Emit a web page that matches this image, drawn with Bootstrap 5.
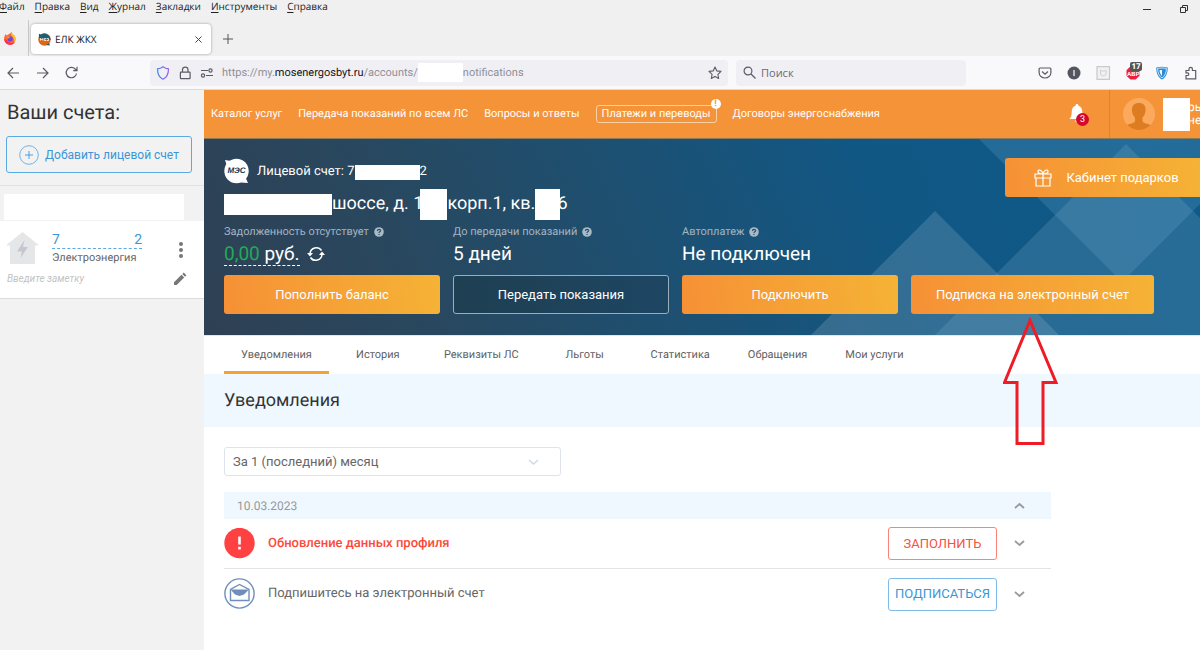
<!DOCTYPE html>
<html lang="ru">
<head>
<meta charset="utf-8">
<meta name="viewport" content="width=device-width, initial-scale=1">
<title>ЕЛК ЖКХ</title>
<link href="https://cdn.jsdelivr.net/npm/bootstrap@5.3.0/dist/css/bootstrap.min.css" rel="stylesheet">
<style>
body{font-family:Roboto,"Liberation Sans",sans-serif;font-size:12px;line-height:16px;color:#666;background:#fff;overflow-x:hidden;text-rendering:geometricPrecision}
svg{display:block;flex:none}
a{text-decoration:none;color:inherit}
.btn{--bs-btn-font-size:13px;--bs-btn-line-height:18px;--bs-btn-border-radius:3px}
/* browser chrome */
.chrome{font-family:"Open Sans","Noto Sans",sans-serif;font-size:10px;background:#f0f0f0;color:#222}
.menubar{height:14px;line-height:13px;gap:10px}
.menubar a:first-child{margin-left:-1px}
.menubar u{text-underline-offset:2px}
.tabstrip{height:42px}
.pinned{width:29px;height:36px;border-right:1px solid #c8c8c8}
.browser-tab{width:180px;height:30px;background:#fff;border-radius:4px;box-shadow:0 0 3px rgba(0,0,0,.35);padding:0 8px 0 7px;gap:4px;margin:0 0 2px 2px}
.plain{background:none;border:0;padding:0;color:inherit}
.window-buttons{gap:27px;padding-right:11px;height:18px}
.toolbar{height:34px;background:#f9f9fb;border-bottom:1px solid #d9d9de;color:#5b5b66}
.url-field,.search-field{height:26px;background:#f0f0f4;border-radius:4px;font-size:11px}
.url-field{flex:578 1 578px;padding:0 6px}
.search-field{flex:230 1 230px;padding:0 7px;gap:5px}
.search-field input{font:inherit;color:#5b5b66;outline:0;min-width:0}
.search-field input::placeholder{color:#6a6a75;opacity:1}
.tools{flex:236 0 236px;gap:15px;padding-right:2px;margin-left:-10px}
.url-text{color:#8f8f98;outline:0;white-space:nowrap;font-family:Roboto,"Liberation Sans",sans-serif}
.url-text b{font-weight:400;color:#15141a}
.mask{display:inline-block;background:#fff;flex:none}
/* sidebar */
.accounts{width:204px;background:#f2f2f2;flex:none}
.accounts h1{font-size:20px;line-height:26px;color:#333;font-weight:400;margin:0;padding:9px 7px 0}
.add-account{margin:11px 12px 12px 6px;height:37px;--bs-btn-color:#3c96d6;--bs-btn-border-color:#5aa9e0;--bs-btn-hover-bg:#3c96d6;gap:6px;--bs-btn-padding-x:0;--bs-btn-font-size:12px;--bs-btn-line-height:16px}
.account-card{background:#fff;border-bottom:1px solid #dcdcdc;height:78px;padding:11px 16px 0 7px;margin-top:1px}
.account-no{color:#3c96d6;font-size:14px;border-bottom:1px dashed #5aa9e0;width:90px}
.account-text{margin-left:14px}
.service{font-size:11px;line-height:18px}
.note{font-style:italic;color:#c3c3c3;font-size:10px;outline:0;width:120px}
/* header */
.site-head{background:#f59338;height:49px;color:#fff;border-bottom:1px solid #8d7a58}
.site-nav{gap:16px;padding-left:7px;white-space:nowrap;font-size:11px}
.boxed{border:1px solid #fbd0a4;border-radius:3px;padding:0 5px}
.alert-dot{top:-7px;right:-5px;width:10px;height:10px;border-radius:50%;background:#fff;color:#f59338;font-size:9px;line-height:10px;text-align:center;font-weight:700}
.count-dot{top:9px;right:-4px;width:13px;height:13px;border-radius:50%;background:#d6062c;font-size:9px;line-height:13px;text-align:center}
.profile{width:91px;border-left:1px solid #dd8432;padding-left:13px;overflow:hidden}
.profile-name{line-height:13px;margin-left:-2px}
/* hero */
.hero{background:linear-gradient(66deg,#2f4054 0%,#28485f 22%,#1d5072 45%,#115784 68%,#0e5a8a 100%);color:#fff;height:196px;padding:19px 0 0 20px}
.facets{right:0;top:0}
.hero-top{min-height:66px}
.acct{font-size:13px;height:28px;line-height:28px}
.addr{font-size:18px;height:36px;line-height:36px}
.covers{margin-left:-3px}
.stats{grid-template-columns:repeat(3,8fr) 9fr;gap:13px;padding-right:46px}
.stats .caption{color:#a5b5c1;gap:5px;height:16px;font-size:11px}
.stats .value{font-size:19px;line-height:28px;height:35px;gap:7px}
.money{border-bottom:1px dashed #fff;line-height:23px;margin-top:2px}
.refresh{height:28px}
.btn-warm{--bs-btn-color:#fff;--bs-btn-hover-color:#fff;background:linear-gradient(80deg,#f69036,#f5b335);border:0;height:39px}
.btn-ghost{--bs-btn-color:#fff;--bs-btn-border-color:#9aaebb;--bs-btn-hover-color:#fff;background:linear-gradient(90deg,#1f3f52,#1d4663);height:39px}
.gift{width:195px;border-radius:3px 0 0 3px;gap:14px;padding-right:4px}
.pointer{top:100%;left:50%;transform:translateX(-50%);margin-top:3px;z-index:2}
/* content */
.page-tabs{gap:4px;padding-left:20px;height:39px;border-top:1px solid #e3e7ea}
.page-tabs .nav-link{min-width:90px;padding:10px 17px 0;height:38px;line-height:18px;text-align:center;color:#606060;font-size:11px;border-bottom:3px solid transparent;border-radius:0}
.page-tabs .active{border-color:#f3a32e}
.band{background:#eff7ff;height:53px;padding-left:20px}
.band h2{font-size:18px;line-height:24px;color:#333;font-weight:400;margin:0}
.content{padding:20px 20px 0}
.period{width:337px;height:29px;font-size:13px;line-height:18px;color:#666;border-color:#dfe3ec;border-radius:3px;padding:0 36px 0 8px;background-size:11px 11px;background-position:right 21px center;background-image:url("data:image/svg+xml,%3csvg xmlns='http://www.w3.org/2000/svg' viewBox='0 0 11 11'%3e%3cpath d='M1 4l4.500 4 4.500-4' fill='none' stroke='%23cdd9e2' stroke-width='1.500'/%3e%3c/svg%3e")}
.feed{max-width:827px;margin-top:16px}
.feed-date{background:#eff7ff;height:27px;color:#999;padding:0 26px 0 13px}
.feed-row{height:49px;padding-right:26px;gap:12px;font-size:13px;line-height:20px}
.feed-row + .feed-row{border-top:1px solid #e4e4e4;height:51px}
.feed-row .btn{width:109px;height:33px;--bs-btn-padding-x:0;margin-right:5px;font-size:13px}
.btn-alert{--bs-btn-color:#f9503f;--bs-btn-border-color:#fb8276;--bs-btn-hover-bg:#f9503f;--bs-btn-hover-color:#fff}
.btn-sky{--bs-btn-color:#3c96d6;--bs-btn-border-color:#7fbbe8;--bs-btn-hover-bg:#3c96d6;--bs-btn-hover-color:#fff}
.urgent{color:#fb4a3b;font-weight:500}
</style>
</head>
<body class="d-flex flex-column min-vh-100">
<svg width="0" height="0" class="position-absolute" aria-hidden="true">
<symbol id="help" viewBox="0 0 10 10"><circle cx="5" cy="5" r="4.800" fill="#a9bac5"/><path d="M3.400 4c0-2.200 3.300-2.100 3.200-.2C6.500 4.900 5 4.800 5 6M5 6.900v1.200" fill="none" stroke="#24506e" stroke-width="1.200"/></symbol>
<symbol id="chev" viewBox="0 0 11 11"><path d="M1 3l4.500 4L10 3" fill="none" stroke="#999" stroke-width="1.800"/></symbol>
</svg>

<header class="chrome position-relative">
  <nav class="menubar d-flex" aria-label="Меню"><a href="#"><u>Ф</u>айл</a><a href="#"><u>П</u>равка</a><a href="#"><u>В</u>ид</a><a href="#"><u>Ж</u>урнал</a><a href="#"><u>З</u>акладки</a><a href="#"><u>И</u>нструменты</a><a href="#"><u>С</u>правка</a></nav>
  <div class="window-buttons d-flex align-items-center position-absolute top-0 end-0">
    <button class="plain" aria-label="Свернуть"><svg width="10" height="10" viewBox="0 0 10 10"><path d="M1 5.500h8" stroke="#333" fill="none"/></svg></button>
    <button class="plain" aria-label="Восстановить"><svg width="10" height="10" viewBox="0 0 10 10"><path d="M1.500 3.500h5v5h-5zM3.500 3.500v-2h5v5h-2" stroke="#333" fill="none"/></svg></button>
  </div>
  <div class="tabstrip d-flex align-items-end">
    <div class="pinned d-flex align-items-center ps-1">
      <svg width="12" height="13" viewBox="0 0 12 13"><path d="M6 1.500L7.500 0l1 2 2.300 2C13 9 9.500 12.800 6 12.800S-.5 10 .3 5L1.500 2l1 1.500z" fill="#ff6a2b"/><path d="M7.500 0l1 2 2.300 2c1.200 2.500.8 4.500-.2 6C10 6 8 4 7 3z" fill="#ffbd2e"/><path d="M.2 7c.5 4 3 5.800 5.800 5.800 2 0 4-.8 5-2.800-3 2-7 1-8-2z" fill="#ff2e5b"/><circle cx="6.200" cy="6.900" r="2.600" fill="#6f48d8"/><path d="M2.500 4.500c1.500-.5 3 0 4 1-1.500 0-1.500 1-3 1.200z" fill="#ff8d2a"/></svg>
    </div>
    <div class="browser-tab d-flex align-items-center">
      <svg width="13" height="13" viewBox="0 0 13 13"><circle cx="6.500" cy="6.500" r="6.200" fill="#dd6714"/><path d="M1 .7l2 .8A6.200 6.200 0 0 1 12.500 7C9 6 4 6 .8 5z" fill="#1d5f70"/><path d="M8 12l4 .5-1-2.500z" fill="#1d5f70"/><path d="M2.500 7.500v-2l1.200 1 1-1v2M8.300 5.500h-2v2h2M9 7.500h1.500v-2H9" fill="none" stroke="#fff" stroke-width=".8"/></svg>
      <span>ЕЛК ЖКХ</span>
      <button class="plain ms-auto" aria-label="Закрыть вкладку"><svg width="9" height="9" viewBox="0 0 9 9"><path d="M1.500 1.500l6 6m0-6l-6 6" stroke="#444" fill="none"/></svg></button>
    </div>
    <button class="plain ms-2 ps-1 mb-1 pb-2" aria-label="Новая вкладка"><svg width="10" height="10" viewBox="0 0 10 10"><path d="M5 0v10M0 5h10" stroke="#555" fill="none"/></svg></button>
  </div>
  <div class="toolbar d-flex align-items-center gap-2">
    <div class="d-flex ps-2" style="width:142px">
      <button class="plain pe-3" style="margin-left:-1px" aria-label="Назад"><svg width="12" height="12" viewBox="0 0 12 12"><path d="M12 6H1M6 1L1 6l5 5" stroke="#5b5b66" fill="none" stroke-width="1.200"/></svg></button>
      <button class="plain px-3 ps-0" aria-label="Вперёд"><svg width="14" height="12" viewBox="-2 0 14 12"><path d="M0 6h11M6 1l5 5-5 5" stroke="#5b5b66" fill="none" stroke-width="1.200"/></svg></button>
      <button class="plain" aria-label="Обновить"><svg width="13" height="13" viewBox="0 0 13 13"><path d="M11.500 7.500A5.200 5.200 0 1 1 10.200 3l1.800 1.500M12 .7v4H8.200" stroke="#5b5b66" fill="none" stroke-width="1.200"/></svg></button>
    </div>
    <div class="url-field d-flex align-items-center gap-2">
      <svg width="14" height="14" viewBox="0 0 14 14"><defs><linearGradient id="sh" x2="1" y2="0"><stop stop-color="#3f8bea"/><stop offset="1" stop-color="#9a5cf0"/></linearGradient></defs><path d="M7 .8c1.800 1.500 3.500 2 5.500 2C12.500 8 11 11.500 7 13.300 3 11.500 1.500 8 1.500 2.800c2 0 3.700-.5 5.500-2z" stroke="url(#sh)" stroke-width="1.200" fill="none"/></svg>
      <svg width="14" height="14" viewBox="0 0 14 14"><path d="M3 6.200h8.500a.6.6 0 0 1 .6.600v5.200a.6.600 0 0 1-.6.600H3a.6.600 0 0 1-.6-.6V6.800a.6.600 0 0 1 .6-.6zM4.500 6V3.800a2.750 2.750 0 0 1 5.500 0V6" stroke="#5b5b66" stroke-width="1.200" fill="none"/></svg>
      <svg width="14" height="14" viewBox="0 0 14 14"><g stroke="#5b5b66" stroke-width="1.200" fill="none"><path d="M1 4.500h7M6 9.500h7"/><circle cx="10.500" cy="4.500" r="1.600"/><circle cx="3" cy="9.500" r="1.600"/></g></svg>
      <div class="url-text d-flex align-items-center" role="textbox" contenteditable="true" aria-label="Адрес"><span>https://my.<b>mosenergosbyt.ru</b>/accounts/</span><span class="mask" style="width:45px;height:19px"></span><span>notifications</span></div>
      <button class="plain ms-auto" aria-label="Добавить в закладки"><svg width="14" height="14" viewBox="0 0 14 14"><path d="M7 1l1.800 3.900 4.200.5-3.100 2.900.8 4.200L7 10.400l-3.700 2.100.8-4.200L1 5.400l4.200-.5z" stroke="#5b5b66" stroke-width="1.100" fill="none" stroke-linejoin="round"/></svg></button>
    </div>
    <label class="search-field d-flex align-items-center"><svg width="13" height="13" viewBox="0 0 13 13"><circle cx="5" cy="5" r="3.900" stroke="#5b5b66" stroke-width="1.200" fill="none"/><path d="M8 8l4.500 4.500" stroke="#5b5b66" stroke-width="1.300"/></svg><input class="plain flex-fill" type="search" placeholder="Поиск" aria-label="Поиск"></label>
    <div class="tools d-flex align-items-center justify-content-end">
      <svg width="14" height="14" viewBox="0 0 14 14"><path d="M2 2h10c.6 0 .9.400.9 1v3.500C12.900 10 10 12 7 12S1.100 10 1.100 6.500V3c0-.6.300-1 .9-1zM4 5.500l3 2.800 3-2.800" stroke="#5b5b66" stroke-width="1.200" fill="none"/></svg>
      <svg width="14" height="14" viewBox="0 0 14 14"><circle cx="7" cy="7" r="6.500" fill="#55555f"/><path d="M7 4v6" stroke="#ddd" stroke-width="1.500"/></svg>
      <svg width="15" height="14" viewBox="0 0 15 14"><path d="M1 .7h12.500v12.600H1z" stroke="#c9c9ce" stroke-width="1.200" fill="#f1f1f3"/><path d="M4.500 4v4.500l2.700 1.500L10 8.500V4L8.500 5H6z" stroke="#d0d0d5" fill="none"/></svg>
      <div class="position-relative"><svg width="14" height="14" viewBox="0 0 14 14"><path d="M4.300.5h5.400l3.800 3.800v5.400l-3.800 3.800H4.300L.5 9.700V4.300z" fill="#ee1d45"/><text x="1" y="10" font-family="Liberation Sans" font-size="6" font-weight="700" fill="#fff">ABP</text></svg><span class="position-absolute text-white fw-bold text-center" style="left:4px;top:-4px;width:12px;height:9px;background:#555;border-radius:2px;font-size:8px;line-height:9px">17</span></div>
      <svg width="14" height="14" viewBox="0 0 14 14"><path d="M7 13.500C3 11.500 1.300 7 1.200 1.500 5 .5 9 .5 12.800 1.500 12.700 7 11 11.500 7 13.500z" fill="#2b8bd8"/><path d="M7 12C4.500 10.500 2.700 7 2.500 2.500 5.500 1.800 8.500 1.800 11.500 2.500 11.300 7 9.500 10.500 7 12z" fill="none" stroke="#d9ecfa" stroke-width=".9"/><path d="M7 4v6C5.500 8.500 4.700 6.500 4.500 4.200z" fill="#fff"/></svg>
      <svg width="14" height="14" viewBox="0 0 14 14"><path d="M2 4.500h3V3a1.700 1.700 0 0 1 3.400 0v1.500h3.300v8.300H2V9.500h1.500a1.300 1.300 0 0 0 0-2.600H2z" stroke="#5b5b66" stroke-width="1.200" fill="none"/></svg>
    </div>
  </div>
</header>

<div class="d-flex flex-fill">
  <aside class="accounts">
    <h1>Ваши счета:</h1>
    <div class="d-flex border-bottom"><button class="btn add-account flex-fill d-flex align-items-center justify-content-center"><svg width="20" height="20" viewBox="0 0 20 20"><circle cx="10" cy="10" r="9.300" stroke="#6fb2e4" fill="none"/><path d="M10 6v8M6 10h8" stroke="#4a9fdc"/></svg>Добавить лицевой счет</button></div>
    <div class="mask d-block mt-2 ms-1" style="width:180px;height:26px"></div>
    <div class="account-card">
      <div class="d-flex">
        <svg width="31" height="33" viewBox="0 0 31 33"><path d="M15.500 0L31 12.500v1h-3V32H3V13.500H0v-1z" fill="#e4e6e8"/><path d="M17.500 8L10 19.500h5L13.500 26 21 15h-5z" fill="#c3c8d0"/></svg>
        <div class="account-text">
          <a href="#" class="account-no d-flex justify-content-between"><span>7</span><span>2</span></a>
          <div class="service">Электроэнергия</div>
        </div>
        <button class="plain ms-auto pe-1" aria-label="Меню счета"><svg width="6" height="18" viewBox="0 0 6 18"><g fill="#777"><circle cx="3" cy="3" r="2"/><circle cx="3" cy="9" r="2"/><circle cx="3" cy="15" r="2"/></g></svg></button>
      </div>
      <div class="d-flex align-items-center mt-1"><input class="plain note" aria-label="Заметка" value="Введите заметку"><button class="plain ms-auto" aria-label="Изменить"><svg width="16" height="14" viewBox="0 0 16 14"><path d="M2 13v-2.700l7.500-7.500 2.700 2.700L4.700 13zM10.300 2l1.400-1.400 2.700 2.700L13 4.700z" fill="#777"/></svg></button></div>
    </div>
  </aside>

  <main class="flex-fill overflow-hidden">
    <div class="site-head d-flex align-items-stretch">
      <nav class="site-nav d-flex align-items-center" aria-label="Разделы">
        <a href="#">Каталог услуг</a><a href="#">Передача показаний по всем ЛС</a><a href="#">Вопросы и ответы</a><a href="#" class="boxed position-relative">Платежи и переводы<span class="alert-dot position-absolute">!</span></a><a href="#">Договоры энергоснабжения</a>
      </nav>
      <button class="plain position-relative ms-auto me-4 align-self-center" aria-label="Уведомления"><svg width="16" height="20" viewBox="0 0 16 20"><path d="M8 0c1 0 1.400.7 1.300 1.500C12 2.300 13.300 4.700 13.300 8c0 4 .8 5.500 2.500 7H.2c1.700-1.500 2.500-3 2.500-7 0-3.300 1.300-5.700 4-6.500C6.600.7 7 0 8 0zM6 16.500h4c0 2.500-4 2.500-4 0z" fill="#fff"/></svg><span class="count-dot position-absolute text-white">3</span></button>
      <div class="profile d-flex align-items-center">
        <svg width="32" height="32" viewBox="0 0 32 32"><defs><clipPath id="av"><circle cx="16" cy="16" r="16"/></clipPath></defs><circle cx="16" cy="16" r="16" fill="#fba95d"/><path clip-path="url(#av)" d="M16 5c5 0 7 3 6.500 8-.3 3-1.500 5-3 6.500v4c2 2.500 7 2 10 5V33H2v-4.500c3-3 8-2.500 10-5v-4c-1.500-1.500-2.700-3.500-3-6.500C8.500 8 11 5 16 5z" fill="#dd7c20"/></svg>
        <span class="mask position-relative ms-2" style="width:27px;height:33px;z-index:1"></span>
        <span class="profile-name">рь<br>не</span>
      </div>
    </div>

    <section class="hero position-relative">
      <svg class="facets position-absolute" width="400" height="196" viewBox="0 0 400 196"><path d="M135 72L11 196h248z" fill="#fff" fill-opacity=".14"/><path d="M179 0l143 143L465 0z" fill="#6aa8cc" fill-opacity=".24"/><path d="M326 5L135 196h265V79z" fill="#8fbdd6" fill-opacity=".19"/></svg>
      <div class="hero-top d-flex position-relative">
        <div class="flex-fill">
          <div class="acct d-flex align-items-center">
            <svg class="me-2" width="25" height="28" viewBox="0 0 25 28"><circle cx="12.500" cy="13" r="12.200" fill="#fff"/><path d="M1 2l6 1-4 5zM24 25l-7-.5 5-4z" fill="#fff"/><text x="12.500" y="15" text-anchor="middle" font-family="Liberation Sans" font-size="8" font-weight="700" font-style="italic" fill="#17354e">МЭС</text></svg>
            <span>Лицевой счет: 7</span><span class="mask" style="width:65px;height:15px"></span><span>2</span>
          </div>
          <div class="addr d-flex align-items-center"><span class="mask" style="width:108px;height:21px"></span><span>шоссе, д. 1</span><span class="mask covers" style="width:27px;height:31px"></span><span>корп.1, кв.</span><span class="mask" style="width:25px;height:31px"></span><span class="covers">6</span></div>
        </div>
        <button class="btn btn-warm gift d-flex align-items-center justify-content-center"><svg width="18" height="18" viewBox="0 0 18 18"><path d="M1 5h16v4H1zM2 9h14v8H2zM9 5v12M9 5C5 5 3.500 3.500 4 2c.8-2 4-1 5 3 1-4 4.200-5 5-3 .5 1.500-1 3-5 3z" stroke="#fff" fill="none" stroke-width="1.200"/></svg>Кабинет подарков</button>
      </div>
      <div class="stats d-grid position-relative">
        <div>
          <div class="caption d-flex align-items-center">Задолженность отсутствует <svg width="10" height="10"><use href="#help"/></svg></div>
          <div class="value d-flex align-items-start"><span class="money"><span style="color:#23a957">0,00</span> руб.</span><button class="plain refresh d-flex align-items-center" aria-label="Обновить баланс"><svg width="18" height="16" viewBox="0 0 18 16"><path d="M14.500 4.500A6.300 6.300 0 0 0 3 7.500M3.500 11.500A6.300 6.300 0 0 0 15 8.500" stroke="#fff" stroke-width="1.500" fill="none"/><path d="M0 7h6L3 10.500zM12 9h6L15 5.500z" fill="#fff"/></svg></button></div>
          <button class="btn btn-warm w-100">Пополнить баланс</button>
        </div>
        <div>
          <div class="caption d-flex align-items-center">До передачи показаний <svg width="10" height="10"><use href="#help"/></svg></div>
          <div class="value">5 дней</div>
          <button class="btn btn-ghost w-100">Передать показания</button>
        </div>
        <div>
          <div class="caption d-flex align-items-center">Автоплатеж <svg width="10" height="10"><use href="#help"/></svg></div>
          <div class="value">Не подключен</div>
          <button class="btn btn-warm w-100">Подключить</button>
        </div>
        <div class="d-flex align-items-end position-relative">
          <button class="btn btn-warm w-100">Подписка на электронный счет</button>
          <svg class="pointer position-absolute" width="60" height="130" viewBox="0 0 60 130"><path d="M27 3.500L1.500 65.500h12.500v61h26v-61h13z" stroke="#ee1c25" stroke-width="3" fill="none"/></svg>
        </div>
      </div>
    </section>

    <ul class="nav page-tabs flex-nowrap">
      <li><a class="nav-link active" href="#">Уведомления</a></li><li><a class="nav-link" href="#">История</a></li><li><a class="nav-link" href="#">Реквизиты ЛС</a></li><li><a class="nav-link" href="#">Льготы</a></li><li><a class="nav-link" href="#">Статистика</a></li><li><a class="nav-link" href="#">Обращения</a></li><li><a class="nav-link" href="#">Мои услуги</a></li>
    </ul>
    <div class="band d-flex align-items-center"><h2>Уведомления</h2></div>
    <div class="content">
      <select class="form-select period" aria-label="Период"><option>За 1 (последний) месяц</option></select>
      <div class="feed">
        <div class="feed-date d-flex align-items-center justify-content-between">10.03.2023<button class="plain" aria-label="Свернуть день"><svg width="11" height="11" viewBox="0 0 11 11"><path d="M1 8l4.500-4L10 8" fill="none" stroke="#999" stroke-width="1.800"/></svg></button></div>
        <div class="feed-row d-flex align-items-center">
          <svg width="32" height="32" viewBox="0 0 32 32"><circle cx="15.500" cy="15" r="15.200" fill="#ff4141"/><path d="M15.500 8.500v8M15.500 18.800v2.700" stroke="#fff" stroke-width="2.600"/></svg>
          <a href="#" class="urgent">Обновление данных профиля</a>
          <button class="btn btn-alert ms-auto">ЗАПОЛНИТЬ</button>
          <button class="plain" aria-label="Развернуть"><svg width="11" height="11"><use href="#chev"/></svg></button>
        </div>
        <div class="feed-row d-flex align-items-center">
          <svg width="32" height="32" viewBox="0 0 32 32"><g stroke="#6f8fbb" fill="none" stroke-width="1.400"><circle cx="15.500" cy="15.500" r="14.600"/><path d="M6.500 11.500v11h18.500v-11l-9.500-5z"/></g><path d="M6.500 11.500h18.500l-5 5-4.500 1.500-4.500-1.500z" fill="#6f8fbb"/></svg>
          <a href="#">Подпишитесь на электронный счет</a>
          <button class="btn btn-sky ms-auto">ПОДПИСАТЬСЯ</button>
          <button class="plain" aria-label="Развернуть"><svg width="11" height="11"><use href="#chev"/></svg></button>
        </div>
      </div>
    </div>
  </main>
</div>
<script src="https://cdn.jsdelivr.net/npm/bootstrap@5.3.0/dist/js/bootstrap.bundle.min.js"></script>
</body>
</html>
